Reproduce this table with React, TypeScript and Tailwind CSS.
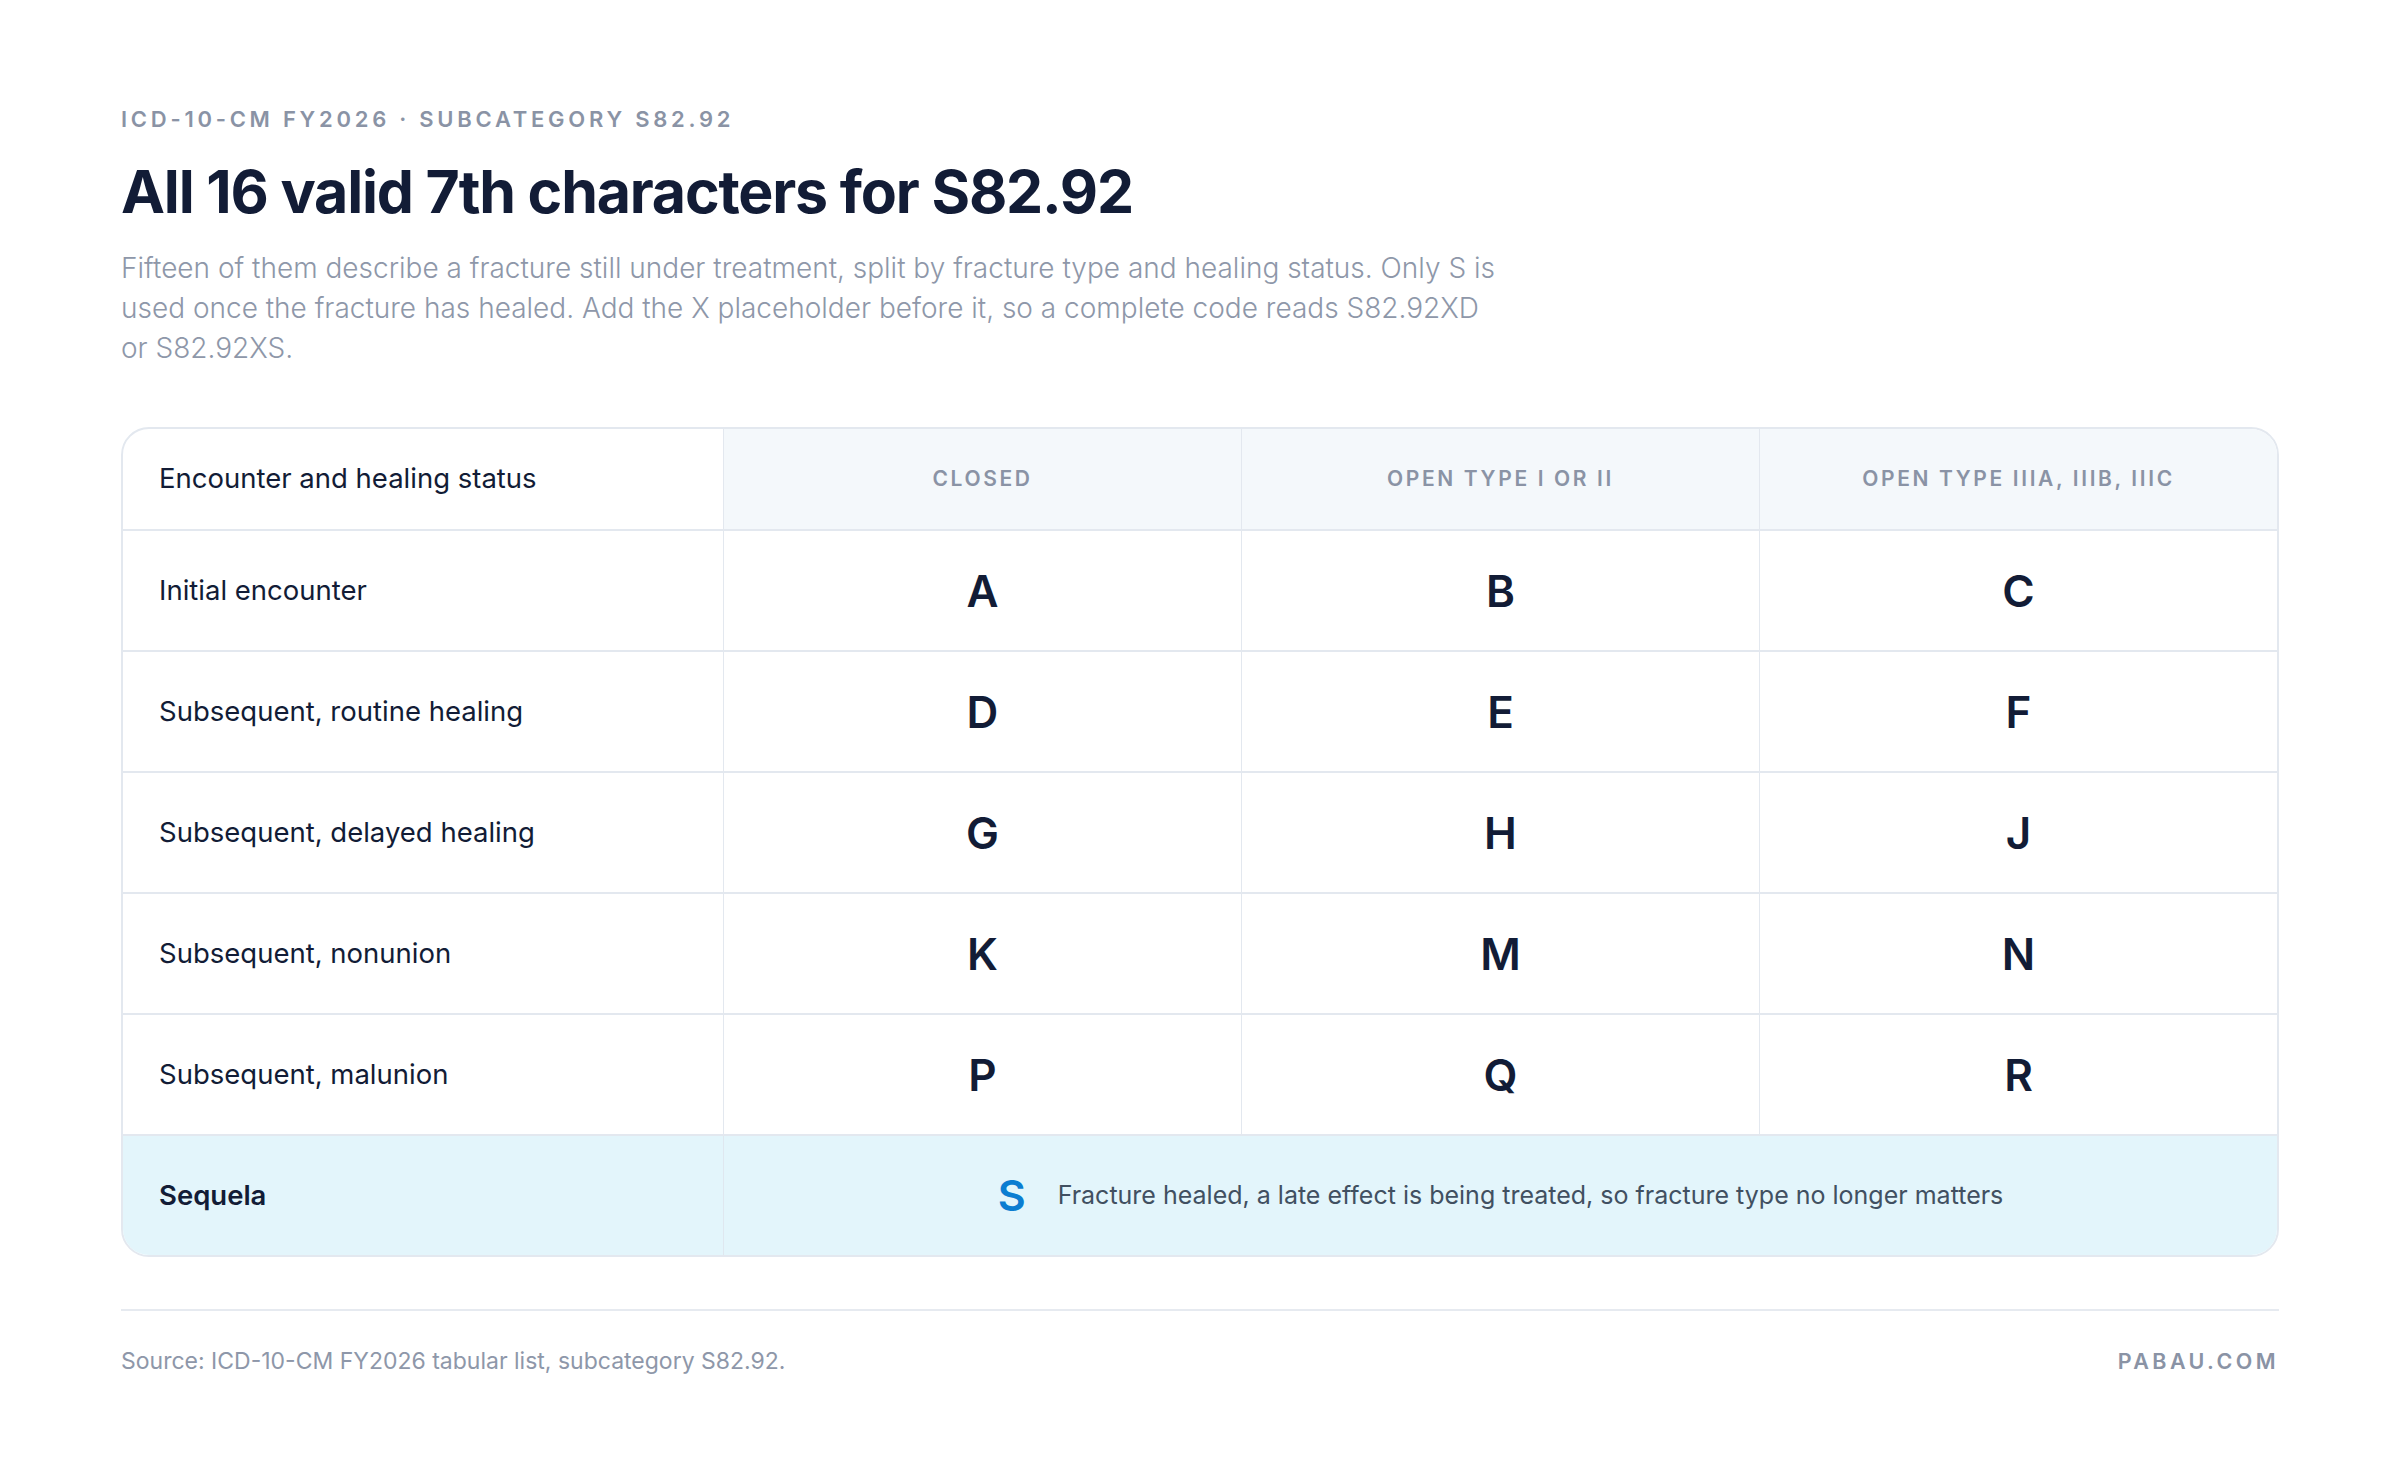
const columns = ["Closed", "Open type I or II", "Open type IIIA, IIIB, IIIC"];

const rows = [
  { label: "Initial encounter", codes: ["A", "B", "C"] },
  { label: "Subsequent, routine healing", codes: ["D", "E", "F"] },
  { label: "Subsequent, delayed healing", codes: ["G", "H", "J"] },
  { label: "Subsequent, nonunion", codes: ["K", "M", "N"] },
  { label: "Subsequent, malunion", codes: ["P", "Q", "R"] },
];

export default function App() {
  return (
    <div className="min-h-screen w-full bg-white px-[121px] pt-[105px] font-['Inter',_'Liberation_Sans',_sans-serif] text-[#121c36]">
      {/* Header */}
      <p className="text-[22px] leading-[28px] font-semibold tracking-[0.17em] text-[#8a93a5] uppercase">
        ICD-10-CM FY2026 · Subcategory S82.92
      </p>
      <h1 className="mt-[23px] text-[59px] leading-[72px] font-bold tracking-[-0.02em] text-[#121c36]">
        All 16 valid 7th characters for S82.92
      </h1>
      <p className="mt-[20px] max-w-[1385px] text-[28px] leading-[40px] font-light text-[#8e97a9]">
        Fifteen of them describe a fracture still under treatment, split by fracture type and healing status. Only S is
        used once the fracture has healed. Add the X placeholder before it, so a complete code reads S82.92XD or
        S82.92XS.
      </p>

      {/* Table */}
      <div className="mt-[59px] overflow-hidden rounded-[28px] border-2 border-[#e3e8ef]">
        <div className="grid grid-cols-[600px_1fr_1fr_1fr]">
          <div className="flex h-[102px] items-center border-b-2 border-[#e3e8ef] px-[36px] text-[27.5px]">
            Encounter and healing status
          </div>
          {columns.map((c) => (
            <div
              key={c}
              className="flex h-[102px] items-center justify-center border-b-2 border-l border-[#e3e8ef] bg-[#f4f8fb] text-[21px] font-semibold tracking-[0.125em] text-[#8a93a5] uppercase"
            >
              {c}
            </div>
          ))}

          {rows.map((r) => (
            <div key={r.label} className="contents">
              <div className="flex h-[121px] items-center border-b-2 border-[#e3e8ef] px-[36px] text-[27.5px]">
                {r.label}
              </div>
              {r.codes.map((code) => (
                <div
                  key={code}
                  className="flex h-[121px] items-center justify-center border-b-2 border-l border-[#e3e8ef] text-[44px] font-semibold"
                >
                  {code}
                </div>
              ))}
            </div>
          ))}

          {/* Sequela */}
          <div className="flex h-[119px] items-center bg-[#e3f5fb] px-[36px] text-[27.5px] font-semibold">Sequela</div>
          <div className="col-span-3 flex h-[119px] items-center justify-center gap-[32px] border-l border-[#dfe7ef] bg-[#e3f5fb]">
            <span className="text-[43px] font-semibold text-[#0b7dd1]">S</span>
            <span className="text-[25px] text-[#415061]">
              Fracture healed, a late effect is being treated, so fracture type no longer matters
            </span>
          </div>
        </div>
      </div>

      {/* Footer */}
      <div className="mt-[52px] flex items-center justify-between border-t-2 border-[#e6eaf0] pt-[33px]">
        <p className="text-[23px] text-[#8e97a9]">Source: ICD-10-CM FY2026 tabular list, subcategory S82.92.</p>
        <p className="text-[21.5px] font-semibold tracking-[0.16em] text-[#8a93a5]">PABAU.COM</p>
      </div>
    </div>
  );
}
